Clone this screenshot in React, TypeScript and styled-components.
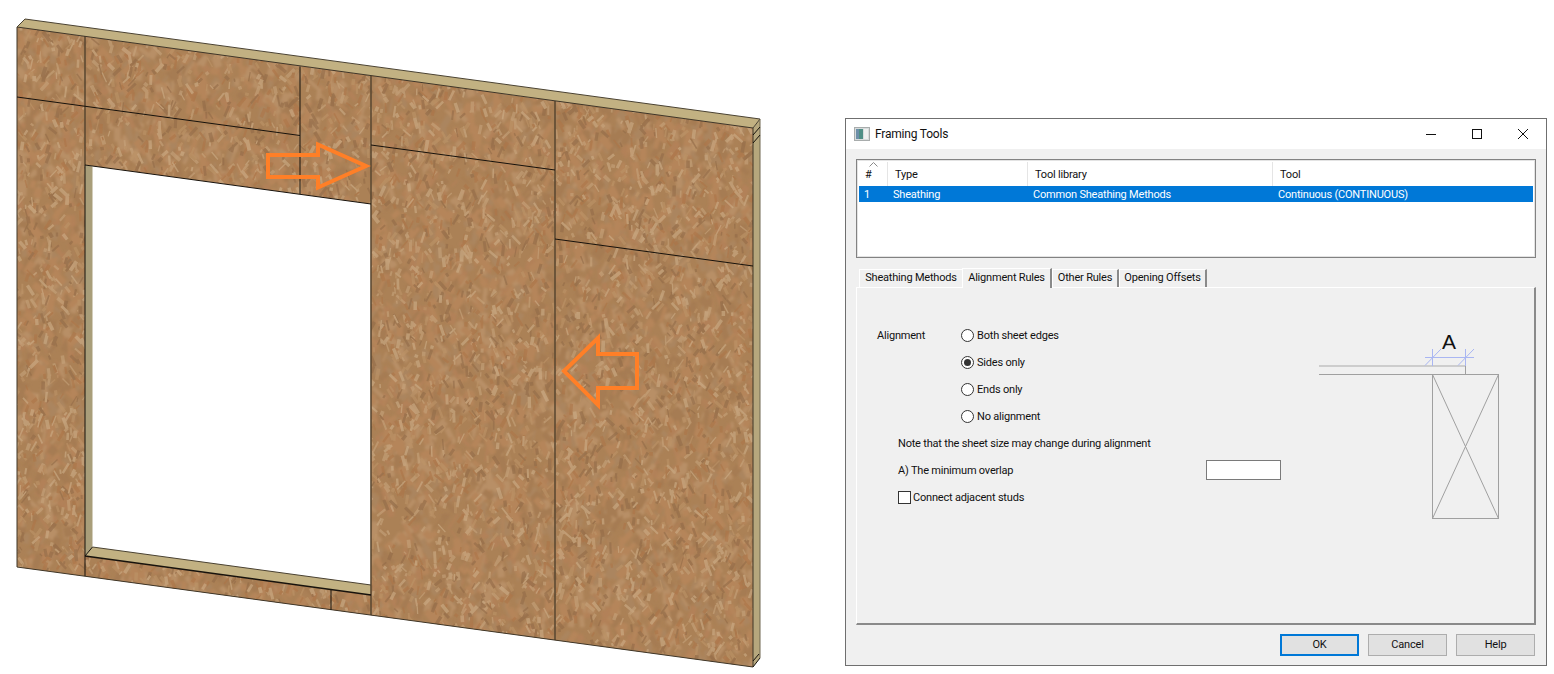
import * as React from 'react';
import styled, { createGlobalStyle } from 'styled-components';

const GlobalStyle = createGlobalStyle`
  html, body {
    margin: 0;
    padding: 0;
    background: #fff;
  }
`;

const Page = styled.div`
  display: flex;
  align-items: flex-start;
  width: 1554px;
  height: 674px;
  overflow: hidden;
  background: #fff;
`;

/* ---------- wall drawing ---------- */

const WallSvg = styled.svg`
  display: block;
  flex: 0 0 845px;
  width: 845px;
  height: 674px;
`;

const PATCH_TONES = ['#b28158', '#ab855e', '#b88f66', '#a67c52', '#b5855a'];
const CHIP_TONES = ['#c7a47c', '#bd9468', '#ad7648', '#936c48', '#cdae88'];

function makeLayer(tones: string[], count: number, minLen: number, maxLen: number, maxWid: number) {
  let seed = 48271 + count;
  const rnd = () => {
    seed = (seed * 16807) % 2147483647;
    return seed / 2147483647;
  };
  const paths: string[] = tones.map(() => '');
  for (let i = 0; i < count; i++) {
    const tone = Math.floor(rnd() * tones.length);
    const x = 10 + rnd() * 750;
    const y = 20 + rnd() * 650;
    const len = minLen + rnd() * (maxLen - minLen);
    const wid = 0.6 + rnd() * maxWid;
    const a = Math.PI / 2 + (rnd() - 0.5) * 1.8;
    const dx = Math.cos(a);
    const dy = Math.sin(a);
    const p = [
      [x - dx * len - dy * wid, y - dy * len + dx * wid],
      [x + dx * len - dy * wid, y + dy * len + dx * wid],
      [x + dx * len + dy * wid, y + dy * len - dx * wid],
      [x - dx * len + dy * wid, y - dy * len - dx * wid],
    ];
    paths[tone] += `M${p.map((q) => `${q[0].toFixed(1)} ${q[1].toFixed(1)}`).join('L')}Z`;
  }
  return paths;
}

const WallDrawing = () => {
  const patches = React.useMemo(() => makeLayer(PATCH_TONES, 9000, 3, 9, 3.5), []);
  const chips = React.useMemo(() => makeLayer(CHIP_TONES, 8000, 1.5, 6, 1.3), []);
  return (
    <WallSvg viewBox="0 0 845 674">
      <defs>
        <clipPath id="face">
          <polygon points="17,27 753,128 753,667 17,567" />
        </clipPath>
        <filter id="patchBlur" x="0" y="0" width="100%" height="100%">
          <feGaussianBlur stdDeviation="1" />
        </filter>
        <filter id="chipBlur" x="0" y="0" width="100%" height="100%">
          <feGaussianBlur stdDeviation="0.6" />
        </filter>
      </defs>

      <polygon points="17,27 25,19 760,119 753,128" fill="#c2b182" />
      <polygon points="753,128 760,119 760,658 753,667" fill="#b6a77d" />

      <g clipPath="url(#face)">
        <rect x="10" y="20" width="750" height="650" fill="#ab8156" />
        <g filter="url(#patchBlur)">
          {patches.map((d, i) => (
            <path key={PATCH_TONES[i]} d={d} fill={PATCH_TONES[i]} />
          ))}
        </g>
        <g filter="url(#chipBlur)" opacity="0.6">
          {chips.map((d, i) => (
            <path key={CHIP_TONES[i]} d={d} fill={CHIP_TONES[i]} />
          ))}
        </g>
      </g>

      {/* opening */}
      <polygon points="85,165 371,204 371,595 85,556" fill="#fff" />
      <polygon points="85,165 92.5,166.5 92.5,547 85,556" fill="#a99e7a" />
      <polygon points="85,556 92.5,547 371,585 371,595" fill="#c2b182" />

      {/* seams */}
      <g fill="none" stroke="#5d4a33" strokeWidth="1.6">
        <line x1="85" y1="36" x2="85" y2="165" />
        <line x1="371" y1="76" x2="371" y2="615" />
        <line x1="555" y1="101" x2="555" y2="640" />
      </g>
      <g fill="none" stroke="#17120c" strokeWidth="1">
        <polyline points="17,27 753,128 753,667 17,567 17,27" stroke="#3f3628" />
        <polyline points="17,27 25,19 760,119 753,128" stroke="#4a4232" />
        <line x1="760" y1="119" x2="760" y2="658" stroke="#6e6650" />
        <line x1="760" y1="658" x2="753" y2="667" />
        <line x1="753" y1="135" x2="760" y2="127" />
        <line x1="753" y1="143" x2="760" y2="135" />
        <line x1="753" y1="661" x2="759" y2="654" />
        <line x1="17" y1="97" x2="300" y2="135.5" />
        <line x1="300" y1="66.5" x2="300" y2="194" />
        <line x1="371" y1="145" x2="555" y2="170" />
        <line x1="555" y1="239" x2="753" y2="266" />
        <line x1="85" y1="165" x2="371" y2="204" />
        <line x1="85" y1="165" x2="85" y2="576" />
        <line x1="85" y1="556" x2="371" y2="595" strokeWidth="1.4" />
        <line x1="85" y1="556" x2="92.5" y2="547" />
        <line x1="92.5" y1="547" x2="371" y2="585" stroke="#4a4232" />
        <line x1="331" y1="589" x2="331" y2="610" />
      </g>

      {/* arrows */}
      <g fill="none" stroke="#ff7f27" strokeWidth="4" strokeLinejoin="miter">
        <polygon points="268,155 318,155 318,144.5 366,166 318,187.5 318,177 268,177" />
        <polygon points="637,354 598,354 598,338 564,371 598,405 598,388 637,388" />
      </g>
    </WallSvg>
  );
};

/* ---------- dialog ---------- */

const Dialog = styled.div`
  box-sizing: border-box;
  flex: 0 0 702px;
  width: 702px;
  height: 548px;
  margin-top: 118px;
  border: 1px solid #6f6f6f;
  background: #f0f0f0;
  display: flex;
  flex-direction: column;
  font-family: 'Roboto', sans-serif;
  font-size: 11px;
  letter-spacing: -0.2px;
  color: #111;
`;

const TitleBar = styled.div`
  flex: 0 0 30px;
  display: flex;
  align-items: center;
  background: #fff;
  padding-left: 8px;
`;

const Caption = styled.div`
  flex: 1;
  margin-left: 5px;
  font-size: 12px;
`;

const CaptionButton = styled.div`
  width: 46px;
  height: 30px;
  display: flex;
  align-items: center;
  justify-content: center;
`;

const Body = styled.div`
  flex: 1;
  display: flex;
  flex-direction: column;
  padding: 10px 10px 0;
`;

const ListView = styled.div`
  box-sizing: border-box;
  height: 99px;
  border: 1px solid #828282;
  box-shadow: inset 0 0 0 1px #e3e3e3;
  background: #fff;
  padding: 2px;
`;

const COLUMNS = '29px 140px 245px 1fr';

const HeaderRow = styled.div`
  display: grid;
  grid-template-columns: ${COLUMNS};
  height: 24px;
`;

const HeaderCell = styled.div`
  position: relative;
  display: flex;
  align-items: center;
  padding-left: 7px;
  border-right: 1px solid #e5e5e5;
  &:first-child {
    padding-left: 6px;
  }
  &:last-child {
    border-right: 0;
  }
`;

const SortMark = styled.svg`
  position: absolute;
  left: 10px;
  top: 0;
`;

const SelectedRow = styled.div`
  display: grid;
  grid-template-columns: ${COLUMNS};
  height: 16px;
  background: #0078d7;
  color: #fff;
  line-height: 17px;
`;

const RowCell = styled.div`
  padding-left: 5px;
  white-space: nowrap;
`;

const TabStrip = styled.div`
  display: flex;
  align-items: flex-end;
  height: 20px;
  margin-top: 9px;
  padding-left: 3px;
  position: relative;
  z-index: 1;
`;

const Tab = styled.div<{ $active?: boolean; $width: number; $edge?: boolean }>`
  box-sizing: border-box;
  width: ${(p) => p.$width}px;
  height: ${(p) => (p.$active ? 20 : 18)}px;
  display: flex;
  align-items: center;
  justify-content: center;
  padding-bottom: ${(p) => (p.$active ? 3 : 2)}px;
  background: #f0f0f0;
  border-top: 1px solid #fff;
  border-left: 1px solid #fff;
  border-right: ${(p) => (p.$edge ? '2px solid #8a8a8a' : '0')};
  margin-bottom: ${(p) => (p.$active ? -1 : 0)}px;
  white-space: nowrap;
  line-height: 1;
`;

const TabPage = styled.div`
  box-sizing: border-box;
  height: 338px;
  display: flex;
  border-top: 1px solid #fff;
  border-left: 1px solid #fff;
  border-right: 2px solid #8a8a8a;
  border-bottom: 2px solid #8a8a8a;
  padding: 34px 0 0 20px;
`;

const Form = styled.div`
  flex: 0 0 402px;
  display: flex;
  flex-direction: column;
`;

const AlignmentBlock = styled.div`
  display: grid;
  grid-template-columns: 84px 1fr;
`;

const FormRow = styled.div`
  display: flex;
  align-items: center;
  height: 27px;
  padding-left: 21px;
  white-space: nowrap;
`;

const RadioList = styled.div`
  display: flex;
  flex-direction: column;
`;

const RadioRow = styled.div`
  display: flex;
  align-items: center;
  gap: 3px;
  height: 27px;
  white-space: nowrap;
`;

const FieldLabel = styled.div`
  height: 27px;
  line-height: 27px;
`;

const RadioDot = styled.span<{ $checked?: boolean }>`
  box-sizing: border-box;
  flex: 0 0 13px;
  width: 13px;
  height: 13px;
  border: 1px solid #333;
  border-radius: 50%;
  background: #fff;
  display: flex;
  align-items: center;
  justify-content: center;
  &::after {
    content: '';
    display: ${(p) => (p.$checked ? 'block' : 'none')};
    width: 7px;
    height: 7px;
    border-radius: 50%;
    background: #333;
  }
`;

const TextField = styled.div`
  box-sizing: border-box;
  width: 75px;
  height: 20px;
  margin: -1px -2px 0 auto;
  border: 1px solid #7a7a7a;
  background: #fff;
`;

const CheckBox = styled.span`
  box-sizing: border-box;
  width: 13px;
  height: 13px;
  margin: -1px 2px 0 0;
  border: 1px solid #333;
  background: #fff;
`;

const Diagram = styled.svg`
  display: block;
  margin: 4px 0 0 31px;
`;

const Footer = styled.div`
  display: flex;
  justify-content: flex-end;
  gap: 9px;
  margin-top: 9px;
  padding-right: 1px;
`;

const DialogButton = styled.div<{ $primary?: boolean }>`
  box-sizing: border-box;
  width: 79px;
  height: 22px;
  display: flex;
  align-items: center;
  justify-content: center;
  padding-bottom: 1px;
  background: #e1e1e1;
  border: ${(p) => (p.$primary ? '2px solid #0078d7' : '1px solid #adadad')};
`;

const HEADERS = ['#', 'Type', 'Tool library', 'Tool'];
const CELLS = ['1', 'Sheathing', 'Common Sheathing Methods', 'Continuous (CONTINUOUS)'];
const RADIOS = ['Both sheet edges', 'Sides only', 'Ends only', 'No alignment'];
const TABS = [
  { label: 'Sheathing Methods', width: 103 },
  { label: 'Alignment Rules', width: 90, active: true, edge: true },
  { label: 'Other Rules', width: 67, edge: true },
  { label: 'Opening Offsets', width: 88, edge: true },
];

const App = () => (
  <Page>
    <GlobalStyle />
    <WallDrawing />
    <Dialog>
      <TitleBar>
        <svg width="16" height="16" viewBox="0 0 16 16">
          <rect x="0.5" y="1.5" width="15" height="13" fill="#d8dcdc" stroke="#a8acac" />
          <rect x="2" y="3" width="7" height="10" fill="#4f8f86" />
          <rect x="2" y="3" width="3" height="10" fill="#6d8fa8" />
          <rect x="10" y="3" width="4" height="10" fill="#eef0f0" />
        </svg>
        <Caption>Framing Tools</Caption>
        <CaptionButton>
          <svg width="10" height="10" viewBox="0 0 10 10">
            <line x1="0" y1="5.5" x2="10" y2="5.5" stroke="#111" />
          </svg>
        </CaptionButton>
        <CaptionButton>
          <svg width="10" height="10" viewBox="0 0 10 10">
            <rect x="0.5" y="0.5" width="9" height="9" fill="none" stroke="#111" />
          </svg>
        </CaptionButton>
        <CaptionButton>
          <svg width="10" height="10" viewBox="0 0 10 10">
            <path d="M0 0L10 10M10 0L0 10" fill="none" stroke="#111" />
          </svg>
        </CaptionButton>
      </TitleBar>
      <Body>
        <ListView>
          <HeaderRow>
            {HEADERS.map((h, i) => (
              <HeaderCell key={h}>
                {i === 0 && (
                  <SortMark width="9" height="5" viewBox="0 0 9 5">
                    <path d="M0.5 4.5L4.5 0.5L8.5 4.5" fill="none" stroke="#8a8a8a" />
                  </SortMark>
                )}
                {h}
              </HeaderCell>
            ))}
          </HeaderRow>
          <SelectedRow>
            {CELLS.map((c) => (
              <RowCell key={c}>{c}</RowCell>
            ))}
          </SelectedRow>
        </ListView>
        <TabStrip>
          {TABS.map((t) => (
            <Tab key={t.label} $active={t.active} $edge={t.edge} $width={t.width}>
              {t.label}
            </Tab>
          ))}
        </TabStrip>
        <TabPage>
          <Form>
            <AlignmentBlock>
              <FieldLabel>Alignment</FieldLabel>
              <RadioList>
                {RADIOS.map((r) => (
                  <RadioRow key={r}>
                    <RadioDot $checked={r === 'Sides only'} />
                    {r}
                  </RadioRow>
                ))}
              </RadioList>
            </AlignmentBlock>
            <FormRow>Note that the sheet size may change during alignment</FormRow>
            <FormRow>
              A) The minimum overlap
              <TextField />
            </FormRow>
            <FormRow>
              <CheckBox />
              Connect adjacent studs
            </FormRow>
          </Form>
          <Diagram width="200" height="200" viewBox="1310 326 200 200">
            <text x="1449" y="349" fontFamily="'Liberation Sans', sans-serif" fontSize="21" textAnchor="middle" fill="#111">
              A
            </text>
            <g fill="none" stroke="#a0a0a0">
              <line x1="1319" y1="366" x2="1465" y2="366" stroke="#c2c2c2" strokeWidth="1.5" />
              <line x1="1319" y1="374.5" x2="1432" y2="374.5" />
              <line x1="1465.5" y1="366" x2="1465.5" y2="374" />
              <rect x="1432.5" y="374.5" width="66" height="144" />
              <line x1="1432.5" y1="374.5" x2="1498.5" y2="518.5" />
              <line x1="1498.5" y1="374.5" x2="1432.5" y2="518.5" />
            </g>
            <g fill="none" stroke="#a9b6f2">
              <line x1="1425" y1="357.5" x2="1474" y2="357.5" />
              <line x1="1432.5" y1="349" x2="1432.5" y2="366" />
              <line x1="1465.5" y1="349" x2="1465.5" y2="366" />
              <line x1="1425" y1="365.5" x2="1441" y2="349" />
              <line x1="1458" y1="365.5" x2="1474" y2="349" />
            </g>
          </Diagram>
        </TabPage>
        <Footer>
          <DialogButton $primary>OK</DialogButton>
          <DialogButton>Cancel</DialogButton>
          <DialogButton>Help</DialogButton>
        </Footer>
      </Body>
    </Dialog>
  </Page>
);

export default App;
